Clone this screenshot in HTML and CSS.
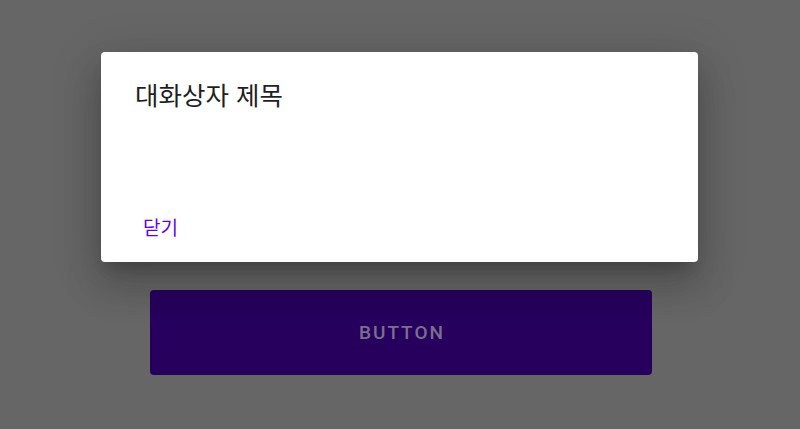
FILE: index.html
```html
<!DOCTYPE html>
<html lang="ko">
<head>
<meta charset="utf-8">
<link rel="stylesheet" href="styles.css">
</head>
<body>
<main class="page">
  <button class="main-btn">BUTTON</button>
</main>
<div class="dialog" role="dialog">
  <h2 class="dialog-title">대화상자 제목</h2>
  <div class="dialog-actions">
    <button class="text-btn">닫기</button>
  </div>
</div>
</body>
</html>
```
FILE: styles.css
```css
html, body {
  margin: 0;
  padding: 0;
}
body {
  width: 800px;
  height: 429px;
  background: #666666;
  overflow: hidden;
  position: relative;
  font-family: Roboto, "Noto Sans CJK KR", sans-serif;
}
.page {
  display: flex;
  justify-content: center;
  padding-top: 290px;
  padding-left: 2px;
}
.main-btn {
  width: 502px;
  height: 85px;
  border: none;
  border-radius: 4px;
  background: #27005e;
  color: #78708c;
  font-family: Roboto, sans-serif;
  font-weight: 500;
  font-size: 19px;
  letter-spacing: 2px;
  padding: 0;
  padding-left: 2px;
}
.dialog {
  position: absolute;
  left: 101px;
  top: 52px;
  width: 597px;
  height: 210px;
  background: #ffffff;
  border-radius: 4px;
  box-shadow: 0 11px 15px -7px rgba(0,0,0,0.2), 0 24px 38px 3px rgba(0,0,0,0.14), 0 9px 46px 8px rgba(0,0,0,0.12);
  display: flex;
  flex-direction: column;
  justify-content: space-between;
  box-sizing: border-box;
}
.dialog-title {
  margin: 0;
  padding: 25px 34px 0;
  font-family: "Noto Sans CJK KR", sans-serif;
  font-weight: 400;
  font-size: 25.5px;
  line-height: 34px;
  color: #1f1f1f;
}
.dialog-actions {
  padding: 0 0 17px 42px;
  display: flex;
}
.text-btn {
  border: none;
  background: none;
  padding: 0;
  font-family: "Noto Sans CJK KR", sans-serif;
  font-size: 19px;
  line-height: 36px;
  color: #6200ee;
}
```
